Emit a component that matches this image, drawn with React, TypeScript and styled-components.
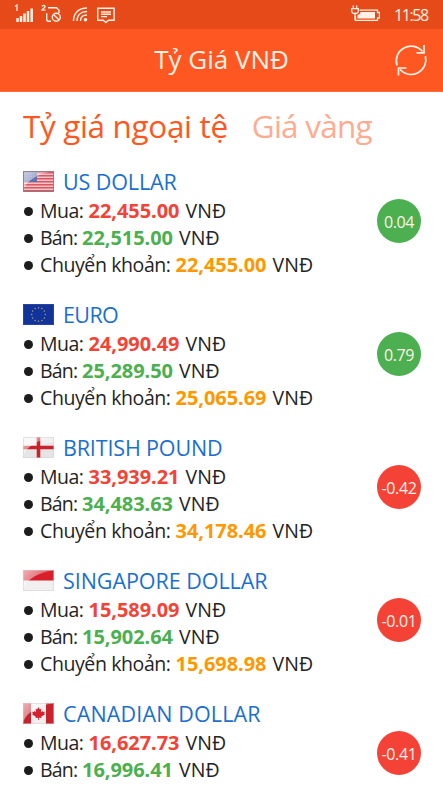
import React from 'react';
import styled, { createGlobalStyle } from 'styled-components';

const Global = createGlobalStyle`
  * { box-sizing: border-box; }
  body { margin: 0; background: #fff; font-family: "Open Sans", "Noto Sans", sans-serif; font-weight: 400; color: #242424; }
`;

const Screen = styled.div`
  height: 788px;
  overflow: hidden;
  display: flex;
  flex-direction: column;
`;

const StatusBar = styled.div`
  flex: none;
  height: 29px;
  background: #e64a19;
  display: flex;
  justify-content: space-between;
  color: #fff1e4;
`;

const StatusRight = styled.div`
  display: flex;
  gap: 14px;
  padding-right: 15px;
`;

const Clock = styled.span`
  width: 34px;
  font-size: 16px;
  line-height: 30px;
  letter-spacing: -1.4px;
  white-space: nowrap;
`;

const Header = styled.header`
  flex: none;
  height: 63px;
  background: #ff5722;
  border-bottom: 1px solid #fb6c3f;
  display: grid;
  grid-template-columns: 60px 1fr 60px;
  align-items: center;
  color: #fff1e4;
`;

const Title = styled.h1`
  grid-column: 2;
  margin: 0;
  text-align: center;
  font-size: 26px;
  line-height: 36px;
  font-weight: 400;
  letter-spacing: 0;
  padding-bottom: 2px;
`;

const RefreshButton = styled.button`
  border: 0;
  padding: 0;
  background: none;
  color: inherit;
  width: 36px;
  height: 36px;
  margin-left: 10px;
`;

const Tabs = styled.nav`
  flex: none;
  display: flex;
  height: 72px;
  padding: 9px 0 0 23px;
  gap: 24px;
`;

const Tab = styled.span<{ $active?: boolean }>`
  font-size: 31.5px;
  line-height: 49px;
  white-space: nowrap;
  letter-spacing: ${p => (p.$active ? '-0.35px' : '-0.75px')};
  color: ${p => (p.$active ? '#ff5722' : '#ffab91')};
`;

const List = styled.main`
  display: flex;
  flex-direction: column;
  gap: 23px;
  padding: 4px 22px 0 23px;
`;

const Item = styled.section`
  flex: none;
  height: 110px;
  display: flex;
  justify-content: space-between;
`;

const Name = styled.h2`
  margin: 0;
  height: 29px;
  display: flex;
  align-items: center;
  gap: 9px;
  font-size: 21.5px;
  line-height: 29px;
  font-weight: 400;
  color: #1a6fd0;
`;

const NameText = styled.span<{ $spacing: number }>`
  letter-spacing: ${p => p.$spacing}px;
  white-space: nowrap;
  padding-bottom: 3px;
`;

const Line = styled.div`
  display: flex;
  align-items: center;
  height: 27px;
  font-size: 19.5px;
  line-height: 27px;
  white-space: nowrap;
`;

const Bullet = styled.i`
  width: 9px;
  height: 9px;
  margin: 2px 7px 0 1px;
  border-radius: 50%;
  background: #1c1c1c;
`;

const Label = styled.span<{ $width: number; $spacing: number }>`
  width: ${p => p.$width}px;
  letter-spacing: ${p => p.$spacing}px;
`;

const Amount = styled.b<{ $color: string }>`
  width: 97px;
  font-family: "Noto Sans", sans-serif;
  font-size: 20px;
  letter-spacing: -0.05px;
  font-weight: 700;
  color: ${p => p.$color};
`;

const Unit = styled.span`
  letter-spacing: 0.1px;
`;

const Badge = styled.div<{ $up: boolean }>`
  flex: none;
  width: 44px;
  height: 44px;
  margin-top: 31px;
  border-radius: 50%;
  background: ${p => (p.$up ? '#4caf50' : '#f44336')};
  color: #fff1e6;
  font-size: 16px;
  line-height: 46px;
  letter-spacing: -0.4px;
  text-align: center;
  white-space: nowrap;
`;

const FlagSvg = styled.svg`
  width: 31px;
  height: 21px;
  margin-top: -3px;
`;

function Flag({ code }: { code: string }) {
  return (
    <FlagSvg viewBox="0 0 31 21">
      <defs>
        <linearGradient id={'gloss' + code} x1="0" y1="0" x2="1" y2="0.5">
          <stop offset="0" stopColor="#fff" stopOpacity=".65" />
          <stop offset="1" stopColor="#fff" stopOpacity=".15" />
        </linearGradient>
      </defs>
      {code === 'us' && (
        <>
          <rect x=".5" y=".5" width="30" height="20" fill="#f2c4c7" />
          {[1, 4, 7, 10, 13, 16, 19].map(y => (
            <rect key={y} x="1" y={y} width="29" height="1.5" fill="#dd5560" />
          ))}
          <rect x="1" y="1" width="13" height="10" fill="#6570a8" />
          <path d="M3 3h10M3 5.5h10M3 8h10" stroke="#8d97c4" strokeDasharray="1 1.5" />
        </>
      )}
      {code === 'eu' && (
        <>
          <rect width="31" height="21" fill="#12339a" />
          {Array.from({ length: 12 }, (_, i) => (
            <circle
              key={i}
              cx={15.5 + 6.8 * Math.sin((i * Math.PI) / 6)}
              cy={10.5 - 6.8 * Math.cos((i * Math.PI) / 6)}
              r=".75"
              fill="#a9a56e"
            />
          ))}
        </>
      )}
      {code === 'gb' && (
        <>
          <rect width="31" height="21" fill="#f1f0f0" />
          <path d="M0 12.5L31 5V21H0z" fill="#e6e5e5" />
          <path d="M0 10.5h31M15.5 0v21" stroke="#c9222e" strokeWidth="3.6" />
        </>
      )}
      {code === 'sg' && (
        <>
          <rect width="31" height="21" fill="#f1efef" />
          <rect width="31" height="10.5" fill="#d7202b" />
        </>
      )}
      {code === 'ca' && (
        <>
          <rect width="31" height="21" fill="#f2eeee" />
          <path d="M0 0h8v21H0zM23 0h8v21h-8z" fill="#c9222c" />
          <path
            d="M15.5 4l1.4 2.5 1.4-.7-.4 3.4 1.7-1.3.5 1 1.8-.2-.7 1.7.8.8-3.8 2.6.3 1.2-2.6-.3V17h-.8v-2.3l-2.6.3.3-1.2-3.8-2.6.8-.8-.7-1.7 1.8.2.5-1 1.7 1.300-.4-3.400 1.400.7z"
            fill="#d3222e"
          />
        </>
      )}
      {code !== 'eu' && <path d="M0 0h31C15 3 5 8 0 19z" fill={`url(#gloss${code})`} />}
      <rect
        x=".5"
        y=".5"
        width="30"
        height="20"
        fill="none"
        stroke={code === 'us' ? '#85777e' : code === 'eu' ? '#4058a8' : '#d8cccc'}
        strokeOpacity={code === 'us' ? 0.9 : 0.5}
      />
    </FlagSvg>
  );
}

const StatusIcons = () => (
  <svg width="125" height="29" fill="none" stroke="currentColor" strokeWidth="1.4">
    <path d="M15 6.500l2-1.500v6" strokeWidth="1.300" />
    <path d="M17.500 18v4M21 16v6M24.500 13.500V22M28 11v11M31.700 8.500V22" strokeWidth="2.500" />
    <path d="M42 6.200q1.800-1.800 3 0c.6 1.400-2.400 2.600-3 4h3.600" strokeWidth="1.300" />
    <path d="M48 7.700h8.500l2.500 2.500V13M51 21.300h-2.500c-1.500 0-1.800-.6-1.800-2v-6" />
    <circle cx="56.300" cy="17.300" r="4" />
    <path d="M53.500 14.500l5.600 5.600" />
    <path d="M73.500 21C73.500 13 79 8 87 8M77 21c0-6 4-9.500 10-9.500M80.500 21c0-4 2.500-6 6.500-6" />
    <circle cx="85.500" cy="19.800" r="1.800" fill="currentColor" stroke="none" />
    <path d="M97.700 8.200h16.400v12h-5.500l-2.700 2.300-2.700-2.300h-5.500zM101 12h10M101 14.300h10M101 16.600h6" />
  </svg>
);

const BatteryIcon = () => (
  <svg width="31" height="29" fill="none" stroke="currentColor" strokeWidth="1.300">
    <path d="M10.500 10.200h18v2.300h2v5.500h-2v2.300H6.500V16" />
    <path d="M11.500 12h14.500v6.500H8.500v-3.500c2-.7 3-1.700 3-3z" fill="currentColor" stroke="none" />
    <path d="M4.300 5.500v3M7.700 5.500v3M6 12.500v7.800" />
    <path d="M2.700 8.700h6.600v2c0 2-1.600 2.900-3.300 2.900s-3.300-.9-3.300-2.900z" />
  </svg>
);

const RefreshIcon = () => (
  <svg width="36" height="36" viewBox="0 0 36 36" fill="none" stroke="currentColor" strokeWidth="1.700">
    <path d="M4 23.500A14.800 14.800 0 0 1 29.500 9.500M32.400 14A14.800 14.800 0 0 1 7 27.500" />
    <path d="M31 3v7.800h-7.500M5.500 33.500v-7.500h8" />
  </svg>
);

const GREEN = '#4caf50';
const RED = '#f44336';
const ORANGE = '#ff9800';

const rates = [
  { code: 'us', name: 'US DOLLAR', spacing: -0.1, buy: '22,455.00', sell: '22,515.00', transfer: '22,455.00', change: '0.04' },
  { code: 'eu', name: 'EURO', spacing: -0.6, buy: '24,990.49', sell: '25,289.50', transfer: '25,065.69', change: '0.79' },
  { code: 'gb', name: 'BRITISH POUND', spacing: -0.15, buy: '33,939.21', sell: '34,483.63', transfer: '34,178.46', change: '-0.42' },
  { code: 'sg', name: 'SINGAPORE DOLLAR', spacing: -0.05, buy: '15,589.09', sell: '15,902.64', transfer: '15,698.98', change: '-0.01' },
  { code: 'ca', name: 'CANADIAN DOLLAR', spacing: 0.15, buy: '16,627.73', sell: '16,996.41', transfer: '', change: '-0.41' },
];

interface PriceProps {
  label: string;
  width: number;
  spacing: number;
  value: string;
  color: string;
}

const Price = ({ label, width, spacing, value, color }: PriceProps) => (
  <Line>
    <Bullet />
    <Label $width={width} $spacing={spacing}>{label}</Label>
    <Amount $color={color}>{value}</Amount>
    <Unit>VNĐ</Unit>
  </Line>
);

export default function App() {
  return (
    <Screen>
      <Global />
      <StatusBar>
        <StatusIcons />
        <StatusRight>
          <BatteryIcon />
          <Clock>11:58</Clock>
        </StatusRight>
      </StatusBar>
      <Header>
        <Title>Tỷ Giá VNĐ</Title>
        <RefreshButton aria-label="Refresh"><RefreshIcon /></RefreshButton>
      </Header>
      <Tabs>
        <Tab $active>Tỷ giá ngoại tệ</Tab>
        <Tab>Giá vàng</Tab>
      </Tabs>
      <List>
        {rates.map(r => (
          <Item key={r.code}>
            <div>
              <Name>
                <Flag code={r.code} />
                <NameText $spacing={r.spacing}>{r.name}</NameText>
              </Name>
              <Price label="Mua:" width={48.5} spacing={-0.5} value={r.buy} color={RED} />
              <Price label="Bán:" width={42} spacing={-0.8} value={r.sell} color={GREEN} />
              {r.transfer && (
                <Price label="Chuyển khoản:" width={135.5} spacing={-0.4} value={r.transfer} color={ORANGE} />
              )}
            </div>
            <Badge $up={!r.change.startsWith('-')}>{r.change}</Badge>
          </Item>
        ))}
      </List>
    </Screen>
  );
}
